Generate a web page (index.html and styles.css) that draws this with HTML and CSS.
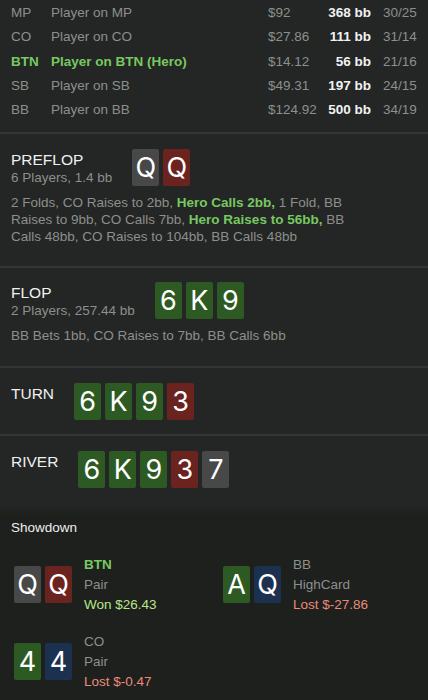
FILE: index.html
```html
<!DOCTYPE html>
<html>
<head>
<meta charset="utf-8">
<link rel="stylesheet" href="styles.css">
</head>
<body>
<div class="page">
  <section class="players">
    <div class="prow"><span class="pos">MP</span><span class="pname">Player on MP</span><span class="stack">$92</span><span class="bb">368 bb</span><span class="ratio">30/25</span></div>
    <div class="prow"><span class="pos">CO</span><span class="pname">Player on CO</span><span class="stack">$27.86</span><span class="bb">111 bb</span><span class="ratio">31/14</span></div>
    <div class="prow hero"><span class="pos">BTN</span><span class="pname">Player on BTN (Hero)</span><span class="stack">$14.12</span><span class="bb">56 bb</span><span class="ratio">21/16</span></div>
    <div class="prow"><span class="pos">SB</span><span class="pname">Player on SB</span><span class="stack">$49.31</span><span class="bb">197 bb</span><span class="ratio">24/15</span></div>
    <div class="prow"><span class="pos">BB</span><span class="pname">Player on BB</span><span class="stack">$124.92</span><span class="bb">500 bb</span><span class="ratio">34/19</span></div>
  </section>

  <section class="street">
    <div class="street-head">
      <div class="street-info">
        <div class="street-title">PREFLOP</div>
        <div class="street-sub">6 Players, 1.4 bb</div>
      </div>
      <div class="cards"><span class="card grey">Q</span><span class="card red">Q</span></div>
    </div>
    <p class="actions">2 Folds, CO Raises to 2bb, <b class="hero-act">Hero Calls 2bb,</b> 1 Fold, BB Raises to 9bb, CO Calls 7bb, <b class="hero-act">Hero Raises to 56bb,</b> BB Calls 48bb, CO Raises to 104bb, BB Calls 48bb</p>
  </section>

  <section class="street flop">
    <div class="street-head">
      <div class="street-info">
        <div class="street-title">FLOP</div>
        <div class="street-sub">2 Players, 257.44 bb</div>
      </div>
      <div class="cards"><span class="card green">6</span><span class="card green">K</span><span class="card green">9</span></div>
    </div>
    <p class="actions">BB Bets 1bb, CO Raises to 7bb, BB Calls 6bb</p>
  </section>

  <section class="street bare">
    <div class="street-head">
      <div class="street-info">
        <div class="street-title">TURN</div>
      </div>
      <div class="cards"><span class="card green">6</span><span class="card green">K</span><span class="card green">9</span><span class="card red">3</span></div>
    </div>
  </section>

  <section class="street bare last">
    <div class="street-head">
      <div class="street-info">
        <div class="street-title">RIVER</div>
      </div>
      <div class="cards"><span class="card green">6</span><span class="card green">K</span><span class="card green">9</span><span class="card red">3</span><span class="card grey">7</span></div>
    </div>
  </section>

  <section class="showdown">
    <div class="sd-title">Showdown</div>
    <div class="sd-grid">
      <div class="sd-player">
        <div class="cards"><span class="card grey">Q</span><span class="card red">Q</span></div>
        <div class="sd-info">
          <div class="sd-pos winner">BTN</div>
          <div class="sd-hand">Pair</div>
          <div class="won">Won $26.43</div>
        </div>
      </div>
      <div class="sd-player">
        <div class="cards"><span class="card green">A</span><span class="card blue">Q</span></div>
        <div class="sd-info">
          <div class="sd-pos">BB</div>
          <div class="sd-hand">HighCard</div>
          <div class="lost">Lost $-27.86</div>
        </div>
      </div>
      <div class="sd-player">
        <div class="cards"><span class="card green">4</span><span class="card blue">4</span></div>
        <div class="sd-info">
          <div class="sd-pos">CO</div>
          <div class="sd-hand">Pair</div>
          <div class="lost">Lost $-0.47</div>
        </div>
      </div>
    </div>
  </section>
</div>
</body>
</html>
```

FILE: styles.css
```css
* { box-sizing: border-box; }
html, body {
  margin: 0;
  padding: 0;
  background: #1d201d;
}
body {
  font-family: "Liberation Sans", Arial, sans-serif;
  font-size: 13.5px;
  color: #8d8f8d;
  -webkit-font-smoothing: antialiased;
}
.page {
  width: 428px;
  height: 700px;
  overflow: hidden;
  background: #1d201d;
}
.players {
  background: #232624;
  padding: 1px 0 10px 11px;
  border-bottom: 2px solid #323532;
}
.prow {
  display: grid;
  grid-template-columns: 40px 217px 60px 43px 1fr;
  height: 24.25px;
  line-height: 24px;
  white-space: nowrap;
}
.prow .bb {
  text-align: right;
  color: #f2f2f2;
  font-weight: 700;
}
.prow .ratio { padding-left: 12px; }
.prow.hero .pos, .prow.hero .pname {
  color: #78c862;
  font-weight: 700;
}
.street {
  background: #232624;
  padding: 15px 11px 20.5px 11px;
  border-bottom: 2px solid #323532;
}
.street.flop { padding-top: 14.5px; padding-bottom: 21.5px; }
.street.bare { padding-bottom: 14px; }
.street.last { border-bottom: none; padding-bottom: 15px; }
.street-head {
  display: flex;
  align-items: flex-start;
  gap: 20px;
}
.street-title {
  color: #f0f0f0;
  font-size: 15.5px;
  line-height: 20px;
  margin-top: 1px;
}
.street-sub {
  line-height: 16px;
}
.cards {
  display: flex;
  gap: 4px;
}
.card {
  width: 27px;
  height: 37px;
  border-radius: 2px;
  color: #ffffff;
  font-family: Inter, "Liberation Sans", sans-serif;
  font-size: 27px;
  line-height: 37px;
  text-align: center;
}
.card.grey { background: #484848; }
.card.red { background: #6b2320; }
.card.green { background: #2c5a22; }
.card.blue { background: #1c3150; }
.actions {
  margin: 8px 0 0 0;
  line-height: 17px;
  max-width: 358px;
}
.hero-act {
  color: #78c862;
  font-weight: 700;
}
.showdown {
  background: linear-gradient(#232624 0px, #1d201d 12px);
  padding: 15px 14px 20px 11px;
}
.sd-title {
  color: #eeeeee;
  line-height: 20px;
}
.sd-grid {
  display: grid;
  grid-template-columns: 209px 1fr;
  row-gap: 17px;
  margin-top: 17px;
  padding-left: 3px;
}
.sd-player {
  display: flex;
  align-items: center;
  gap: 12px;
}
.sd-info { line-height: 20px; }
.sd-pos.winner { color: #78c862; font-weight: 700; }
.won { color: #b8e68a; }
.lost { color: #ea8b7b; }
```
